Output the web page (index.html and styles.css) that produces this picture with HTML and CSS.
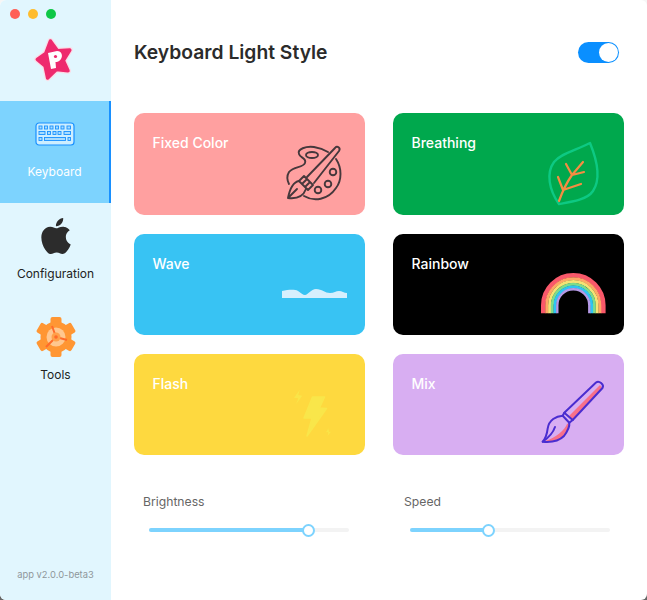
FILE: index.html
```html
<!DOCTYPE html>
<html>
  <head>
    <meta charset="utf-8">
    <title>Keyboard Light Style</title>
    <link rel="stylesheet" href="styles.css">
  </head>

  <body>
    <div class="window">
      <aside class="sidebar">
        <div class="trafficLights">
          <span class="light red"></span>
          <span class="light yellow"></span>
          <span class="light green"></span>
        </div>

        <div class="logoBox">
          <svg width="50" height="50" viewBox="0 0 50 50">
            <path class="logoOutline" d="M20.4 7 L27.5 16.7 L39.8 16 L33.3 26.5 L38 36.7 L26.4 35.5 L17.6 44 L15.1 32 L7.3 25.4 L15.8 19.4 Z"/>
            <path class="logoStar" d="M20.4 7 L27.5 16.7 L39.8 16 L33.3 26.5 L38 36.7 L26.4 35.5 L17.6 44 L15.1 32 L7.3 25.4 L15.8 19.4 Z"/>
            <path class="logoLetter" d="M18 19 L27 17 C32 17 33 22 31 25 C29.5 27.5 27 28 25.5 28 L26 34 L21 35 Z"/>
            <circle class="logoDot" cx="25.5" cy="22.5" r="1.6"/>
          </svg>
        </div>

        <nav class="nav">
          <div class="navItem active">
            <div class="navIcon">
              <svg width="40" height="24" viewBox="0 0 40 24">
                <rect x="1" y="1" width="38" height="22" rx="3" class="kbBody"/>
                <g class="kbKeys">
                  <rect x="4" y="4" width="3" height="3"/><rect x="9.5" y="4" width="3" height="3"/><rect x="15" y="4" width="3" height="3"/><rect x="20.5" y="4" width="3" height="3"/><rect x="26" y="4" width="3" height="3"/><rect x="32" y="4" width="3.5" height="3"/>
                  <rect x="4" y="9.5" width="6" height="3"/><rect x="12.5" y="9.5" width="3" height="3"/><rect x="18" y="9.5" width="3" height="3"/><rect x="23" y="9.5" width="3" height="3"/><rect x="29" y="9.5" width="6.5" height="3"/>
                  <rect x="4" y="15.5" width="3" height="3"/><rect x="9.5" y="15.5" width="21" height="3"/><rect x="33" y="15.5" width="2.5" height="3"/>
                </g>
              </svg>
            </div>
            <span class="navLabel">Keyboard</span>
          </div>

          <div class="navItem">
            <div class="navIcon">
              <svg width="36" height="36" viewBox="0 0 24 24">
                <path class="appleLogo" d="M12.152 6.896c-.948 0-2.415-1.078-3.96-1.04-2.04.027-3.91 1.183-4.961 3.014-2.117 3.675-.546 9.103 1.519 12.09 1.013 1.454 2.208 3.09 3.792 3.039 1.52-.065 2.09-.987 3.935-.987 1.831 0 2.35.987 3.96.948 1.637-.026 2.676-1.48 3.676-2.948 1.156-1.688 1.636-3.325 1.662-3.415-.039-.013-3.182-1.221-3.22-4.857-.026-3.04 2.48-4.494 2.597-4.559-1.429-2.09-3.623-2.324-4.39-2.376-2-.156-3.675 1.09-4.61 1.09zM15.53 3.83c.843-1.012 1.4-2.427 1.245-3.83-1.207.052-2.662.805-3.532 1.818-.78.896-1.454 2.338-1.273 3.714 1.338.104 2.715-.688 3.559-1.701"/>
              </svg>
            </div>
            <span class="navLabel">Configuration</span>
          </div>

          <div class="navItem">
            <div class="navIcon">
              <svg width="40" height="42" viewBox="0 0 40 42">
                <g class="gearTeeth">
                  <rect x="14.5" y="1" width="11" height="40" rx="2"/>
                  <rect x="14.5" y="1" width="11" height="40" rx="2" transform="rotate(60 20 21)"/>
                  <rect x="14.5" y="1" width="11" height="40" rx="2" transform="rotate(120 20 21)"/>
                </g>
                <circle cx="20" cy="21" r="15.5" class="gearRing"/>
                <circle cx="20" cy="21" r="9.5" class="gearHole"/>
                <path d="M20 21 L10 31 M20 21 L31 24 M20 21 L16 10" class="gearSpoke"/>
                <circle cx="20" cy="21" r="4.5" class="gearHub"/>
                <circle cx="20" cy="21" r="1.8" class="gearCore"/>
              </svg>
            </div>
            <span class="navLabel">Tools</span>
          </div>
        </nav>

        <div class="version">app v2.0.0-beta3</div>
      </aside>

      <main class="content">
        <header class="header">
          <h1 class="title">Keyboard Light Style</h1>
          <div class="toggle"><span class="toggleKnob"></span></div>
        </header>

        <div class="cards">
          <div class="card fixedColor">
            <span class="cardTitle">Fixed Color</span>
            <svg class="cardIcon" width="95" height="85" viewBox="0 0 95 85">
              <g class="lineDark">
                <path d="M58 22 C53 19 50 18 44 17 C36 16 27 19 29 24 C30 28 37 28 35 33 C33 38 24 36 19 42 C16 47 18 52 19 54"/>
                <path d="M66 29 C72 38 72 50 66 58 C58 70 44 72 34 66"/>
                <ellipse cx="42" cy="25" rx="6" ry="3"/>
                <circle cx="63" cy="42" r="3.3"/>
                <circle cx="58" cy="54" r="3.3"/>
                <circle cx="48" cy="60" r="3.3"/>
                <path d="M37 47 L65 18 C67 15 71 18 69 21 L44 53"/>
                <path d="M34 46 L43 55 L38 60 L29 51 Z M37 49 L32 54 M40 52 L35 57"/>
                <path d="M29 51 C23 52 20 58 18 68 C26 69 33 67 36 59 M18 68 L27 59"/>
              </g>
            </svg>
          </div>

          <div class="card breathing">
            <span class="cardTitle">Breathing</span>
            <svg class="cardIcon" width="95" height="85" viewBox="0 0 95 85">
              <path class="leaf" d="M61 13 C48 20 32 23 25 32 C17 43 20 60 30 74 C42 72 58 70 64 61 C72 49 68 30 61 13 Z"/>
              <path class="leafVein" d="M30 71 C34 60 38 52 43 45 L54 32 M37 34 L43 45 L55 42 M29 47 L34 60 M34 60 L52 54"/>
            </svg>
          </div>

          <div class="card wave">
            <span class="cardTitle">Wave</span>
            <svg class="cardIcon" width="95" height="85" viewBox="0 0 95 85">
              <path class="waveShape" d="M12 41 C18 40 24 39 28 41 C31 43 33 45 35 45 C38 45 41 39 46 39 C52 39 55 43 60 43 C64 43 66 41 69 41 C72 41 74 43 77 43 L77 48 L12 48 Z"/>
            </svg>
          </div>

          <div class="card rainbow">
            <span class="cardTitle">Rainbow</span>
            <svg class="cardIcon" width="95" height="85" viewBox="0 0 95 85">
              <g class="arcs">
                <path class="bandRed" d="M14.3 63.3 L14.3 55.3 A30 30 0 0 1 74.3 55.3 L74.3 63.3"/>
                <path class="bandOrange" d="M17.8 63.3 L17.8 55.3 A26.5 26.5 0 0 1 70.8 55.3 L70.8 63.3"/>
                <path class="bandYellow" d="M20.6 63.3 L20.6 55.3 A23.7 23.7 0 0 1 68 55.3 L68 63.3"/>
                <path class="bandGreen" d="M23.3 63.3 L23.3 55.3 A21 21 0 0 1 65.3 55.3 L65.3 63.3"/>
                <path class="bandBlue" d="M26 63.3 L26 55.3 A18.3 18.3 0 0 1 62.6 55.3 L62.6 63.3"/>
                <path class="bandPurple" d="M28.3 63.3 L28.3 55.3 A16 16 0 0 1 60.3 55.3 L60.3 63.3"/>
              </g>
            </svg>
          </div>

          <div class="card flash">
            <span class="cardTitle">Flash</span>
            <svg class="cardIcon" width="95" height="85" viewBox="0 0 95 85">
              <path class="boltMain" d="M42.5 27 L54.5 27 L49.5 38 L56.5 38.5 L37 66 L42 48 L34 48 Z"/>
              <path class="boltSmall" d="M30 19.3 L24 27.7 L28.3 28.3 L26 34.3 L32.3 25.7 L28.3 25 Z"/>
              <path class="boltSmall" d="M58.3 58.3 L56 62.3 L58.3 62.3 L57.7 65.7 L61 61.7 L59 61.7 Z"/>
            </svg>
          </div>

          <div class="card mix">
            <span class="cardTitle">Mix</span>
            <svg class="cardIcon" width="95" height="85" viewBox="0 0 95 85">
              <path class="brushPink" d="M40 46 L71 15 L73 18 L43.7 50 Z"/>
              <path class="brushPink" d="M38 54 C36 60 26 68 16 71 C22 72 30 71 35 66 C38 62 41 58 40 53 Z"/>
              <g class="linePurple">
                <path d="M35.3 42.7 L67 12.5 C70 10 75.5 14.5 73.5 18 L43.7 50 Z"/>
                <path d="M35.3 42.7 L33.7 45.7 L40.3 52.7 L43.7 50"/>
                <path d="M33.7 45.7 C27 46 20 50 18.7 58.3 C18 64 16 69 13.7 71.7 C22 72.5 30 71 35 66 C38 62 41 58 40.3 52.7"/>
                <path d="M13.7 71.7 C19 68 24 63 26 57"/>
              </g>
            </svg>
          </div>
        </div>

        <div class="sliders">
          <div class="sliderGroup">
            <label class="sliderLabel">Brightness</label>
            <div class="track">
              <div class="fill" style="width: 160px"><span class="thumb"></span></div>
            </div>
          </div>
          <div class="sliderGroup">
            <label class="sliderLabel">Speed</label>
            <div class="track">
              <div class="fill" style="width: 79px"><span class="thumb"></span></div>
            </div>
          </div>
        </div>
      </main>
    </div>
  </body>
</html>
```

FILE: styles.css
```css
html, body {
  margin: 0;
  height: 600px;
  overflow: hidden;
  background: linear-gradient(#f6f6f6 50%, #666 50%);
  font-family: Inter, "Liberation Sans", sans-serif;
}

.window {
  display: flex;
  width: 647px;
  height: 600px;
  background-color: #fff;
  border-radius: 6px;
  overflow: hidden;
}

/* sidebar */
.sidebar {
  display: flex;
  flex-direction: column;
  width: 111px;
  height: 600px;
  background-color: #e1f6fe;
  flex-shrink: 0;
}

.trafficLights {
  display: flex;
  gap: 8px;
  padding: 9px 0 0 10px;
  height: 10px;
}

.light {
  width: 10px;
  height: 10px;
  border-radius: 50%;
}

.red { background-color: #ff5f57; }
.yellow { background-color: #febc2e; }
.green { background-color: #0ec746; }

.logoBox {
  height: 82px;
  padding: 15px 0 0 30px;
  box-sizing: border-box;
}

.logoBox svg { display: block; }

.logoOutline {
  fill: none;
  stroke: #fbdce6;
  stroke-width: 6;
  stroke-linejoin: round;
}

.logoStar {
  fill: #ee2a6e;
  stroke: #ee2a6e;
  stroke-width: 3.5;
  stroke-linejoin: round;
}

.logoLetter { fill: #fff; }
.logoDot { fill: #ee2a6e; }

.nav {
  display: flex;
  flex-direction: column;
}

.navItem {
  display: flex;
  flex-direction: column;
  align-items: center;
  height: 101.5px;
  padding-top: 13px;
  box-sizing: border-box;
}

.navItem.active {
  background-color: #7dd3fe;
  border-right: 2px solid #1890ff;
}

.navIcon {
  display: flex;
  align-items: center;
  justify-content: center;
  height: 40px;
  margin-bottom: 10px;
}

.navLabel {
  font-size: 12px;
  line-height: 16px;
  color: #222;
}

.active .navLabel { color: #fff; }

.version {
  margin-top: auto;
  margin-bottom: 18px;
  text-align: center;
  font-size: 9.4px;
  line-height: 14px;
  color: #8f979b;
}

.kbBody { fill: #cdeeff; stroke: #1890ff; stroke-width: 1.2; }
.kbKeys rect { fill: #a8dcff; stroke: #1890ff; stroke-width: 0.9; }
.appleLogo { fill: #2c2c2c; }
.gearTeeth rect { fill: #ff9633; }
.gearRing { fill: #ff9633; }
.gearHole { fill: #ffc78f; }
.gearSpoke { stroke: #ff6a2a; stroke-width: 2; fill: none; }
.gearHub { fill: #ffa04a; }
.gearCore { fill: #ff6a2a; }

/* main area */
.content {
  flex: 1;
  min-width: 0;
  padding: 0 23px;
}

.header {
  display: flex;
  justify-content: space-between;
  align-items: center;
  height: 105px;
  margin-bottom: 8px;
}

.title {
  margin: 0 0 2px;
  font-size: 19.3px;
  font-weight: 600;
  color: #2b2b2b;
}

.toggle {
  display: flex;
  justify-content: flex-end;
  align-items: center;
  width: 41px;
  height: 21px;
  margin-right: 5px;
  padding-right: 1px;
  box-sizing: border-box;
  background-color: #0a8fff;
  border-radius: 11px;
}

.toggleKnob {
  width: 19px;
  height: 19px;
  border-radius: 50%;
  background-color: #fff;
}

.cards {
  display: grid;
  grid-template-columns: 231px 231px;
  grid-template-rows: 102px 101px 101px;
  column-gap: 28px;
  row-gap: 19px;
}

.card {
  display: flex;
  justify-content: space-between;
  border-radius: 10px;
  overflow: hidden;
}

.cardTitle {
  padding: 20.5px 0 0 18.5px;
  font-size: 14px;
  line-height: 18px;
  font-weight: 500;
  color: #fff;
}

.cardIcon {
  align-self: flex-end;
  flex-shrink: 0;
}

.fixedColor { background-color: #ffa0a0; }
.breathing { background-color: #00a84d; }
.wave { background-color: #38c3f3; }
.rainbow { background-color: #000; }
.flash { background-color: #fed93f; }
.mix { background-color: #d8aef2; }

.lineDark * {
  fill: none;
  stroke: #46383c;
  stroke-width: 1.9;
  stroke-linecap: round;
  stroke-linejoin: round;
}

.leaf {
  fill: none;
  stroke: #0dc983;
  stroke-width: 2.4;
  stroke-linejoin: round;
}

.leafVein {
  fill: none;
  stroke: #f58c42;
  stroke-width: 2.2;
  stroke-linecap: round;
  stroke-linejoin: round;
}

.waveShape { fill: #d6effd; }

.arcs path { fill: none; stroke-width: 3; }
.arcs .bandRed { stroke: #f9586a; stroke-width: 4.6; }
.bandOrange { stroke: #ffa766; }
.bandYellow { stroke: #f6e275; }
.bandGreen { stroke: #7fdc8a; }
.bandBlue { stroke: #2fc4f2; }
.arcs .bandPurple { stroke: #b59ae6; stroke-width: 2.4; }

.boltMain {
  fill: #f9e64a;
  stroke: #f9e64a;
  stroke-width: 1.5;
  stroke-linejoin: round;
}

.boltSmall { fill: #f9e64a; opacity: 0.85; }

.brushPink { fill: #f7708a; }

.linePurple * {
  fill: none;
  stroke: #4a2dd0;
  stroke-width: 2;
  stroke-linecap: round;
  stroke-linejoin: round;
}

/* sliders */
.sliders {
  display: flex;
  gap: 41px;
  margin-top: 39px;
  padding-left: 9px;
}

.sliderGroup {
  width: 220px;
}

.sliderLabel {
  display: block;
  font-size: 12.2px;
  line-height: 16px;
  color: #666;
  margin-bottom: 18px;
}

.track {
  width: 200px;
  height: 4px;
  margin-left: 6px;
  background-color: #f3f3f3;
  border-radius: 2px;
}

.fill {
  position: relative;
  height: 4px;
  background-color: #7dd3fe;
  border-radius: 2px;
}

.thumb {
  position: absolute;
  right: -6px;
  top: -4.5px;
  width: 9px;
  height: 9px;
  background-color: #fff;
  border: 2px solid #7dd3fe;
  border-radius: 50%;
}
```
